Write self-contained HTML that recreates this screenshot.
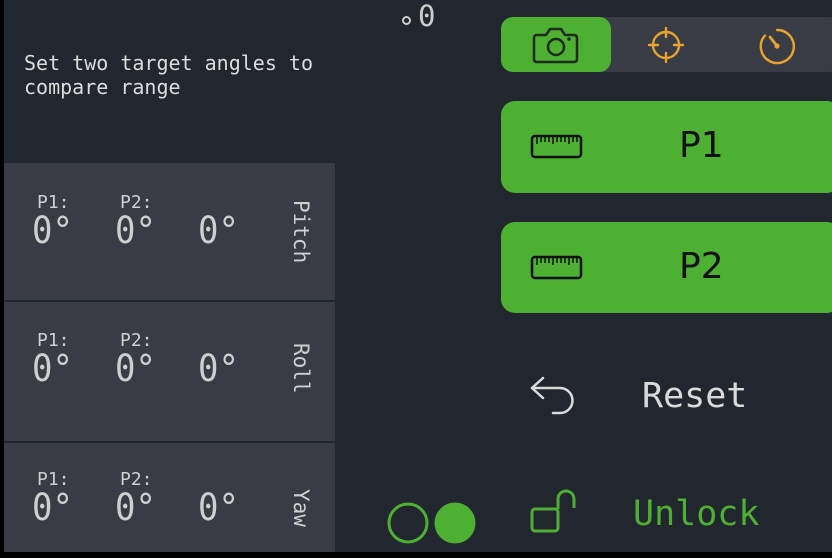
<!DOCTYPE html>
<html><head><meta charset="utf-8"><style>
*{margin:0;padding:0;box-sizing:border-box}
body{width:832px;height:558px;background:#000;position:relative;overflow:hidden;font-family:"DejaVu Sans Mono","Liberation Mono",monospace}
#app{position:absolute;left:4px;top:0;width:828px;height:552px;background:#22262e}
.a{position:absolute;white-space:nowrap;line-height:1}
.panel{position:absolute;left:4px;width:331px;background:#393c44}
.lbl{font-size:18px;color:#cfcfcf}
.val{font-size:34px;color:#cfcfcf;transform:scaleY(1.1);transform-origin:top left}
.vt{writing-mode:vertical-rl;font-size:21px;color:#cfcfcf;line-height:1}
</style></head><body>
<div id="app"></div>
<div class="a" style="left:24px;top:51px;font-size:20px;color:#dcdcdc;line-height:24px">Set two target angles to<br>compare range</div>
<div style="position:absolute;left:402px;top:16px;width:9px;height:9px;border:2px solid #ccc;border-radius:50%"></div>
<div class="a" style="left:418px;top:2px;font-size:29px;color:#ccc">0</div>

<div class="panel" style="top:163px;height:137px"></div>
<div class="panel" style="top:302px;height:139px"></div>
<div class="panel" style="top:443px;height:109px"></div>

<div class="a lbl" style="left:37px;top:194px">P1:</div><div class="a lbl" style="left:120px;top:194px">P2:</div>
<div class="a val" style="left:32px;top:212px">0°</div><div class="a val" style="left:115px;top:212px">0°</div><div class="a val" style="left:198px;top:212px">0°</div>
<div class="a vt" style="left:290px;top:200px">Pitch</div>

<div class="a lbl" style="left:37px;top:332px">P1:</div><div class="a lbl" style="left:120px;top:332px">P2:</div>
<div class="a val" style="left:32px;top:350px">0°</div><div class="a val" style="left:115px;top:350px">0°</div><div class="a val" style="left:198px;top:350px">0°</div>
<div class="a vt" style="left:290px;top:343px">Roll</div>

<div class="a lbl" style="left:37px;top:471px">P1:</div><div class="a lbl" style="left:120px;top:471px">P2:</div>
<div class="a val" style="left:32px;top:489px">0°</div><div class="a val" style="left:115px;top:489px">0°</div><div class="a val" style="left:198px;top:489px">0°</div>
<div class="a vt" style="left:290px;top:489px">Yaw</div>

<div style="position:absolute;left:501px;top:17px;width:340px;height:55px;background:#393c44;border-radius:12px"></div>
<div style="position:absolute;left:501px;top:17px;width:110px;height:55px;background:#4eb033;border-radius:12px"></div>
<svg style="position:absolute;left:0;top:0" width="832" height="558">
<g fill="none" stroke="#1f2a1a" stroke-width="2.5" stroke-linejoin="round">
<path d="M537 35 h9 l4 -6 h11 l4 6 h9 q3 0 3 3 v21 q0 3 -3 3 h-37 q-3 0 -3 -3 v-21 q0 -3 3 -3z"/>
<circle cx="556" cy="47" r="8"/>
</g><circle cx="569" cy="39" r="1.8" fill="#1f2a1a"/>
<g fill="none" stroke="#e8a232" stroke-width="2.4" stroke-linecap="round">
<circle cx="666" cy="45" r="13"/><path d="M666 28v9M666 53v9M649 45h9M674 45h9"/>
<path d="M777 30 A16.5 16.5 0 1 1 765 35.5"/>
<path d="M777 46 L770 37" stroke-width="2.8"/>
</g><circle cx="777" cy="46" r="2.6" fill="#e8a232"/>
</svg>

<div style="position:absolute;left:501px;top:101px;width:340px;height:92px;background:#4eb033;border-radius:14px"></div>
<div style="position:absolute;left:501px;top:222px;width:340px;height:91px;background:#4eb033;border-radius:14px"></div>
<div class="a" style="left:679px;top:128px;font-size:36px;font-family:'DejaVu Sans',sans-serif;color:#111">P1</div>
<div class="a" style="left:679px;top:249px;font-size:36px;font-family:'DejaVu Sans',sans-serif;color:#111">P2</div>
<svg style="position:absolute;left:0;top:0" width="832" height="558">
<g fill="none" stroke="#111" stroke-width="2.5">
<rect x="532" y="136" width="49" height="21" rx="3"/><rect x="532" y="257" width="49" height="21" rx="3"/>
</g>
<g stroke="#111" stroke-width="1.5">
<path d="M537 137v7M541 137v5M545 137v5M549 137v5M553 137v7M557 137v5M561 137v5M565 137v5M569 137v7M573 137v5M577 137v5"/>
<path d="M537 258v7M541 258v5M545 258v5M549 258v5M553 258v7M557 258v5M561 258v5M565 258v5M569 258v7M573 258v5M577 258v5"/>
</g>
<g fill="none" stroke="#dadada" stroke-width="2.5" stroke-linecap="round" stroke-linejoin="round">
<path d="M543 378 L532 388 L543 398"/><path d="M532 388 H560 a12 12 0 0 1 0 25 H553"/>
</g>
<g fill="none" stroke="#4eb033" stroke-width="3">
<circle cx="408" cy="523" r="19"/>
<rect x="532" y="509" width="26" height="22" rx="3"/>
<path d="M558 509 V499 a8 8 0 0 1 16 0 V508"/>
</g>
<circle cx="455" cy="523" r="20.5" fill="#4eb033"/>
</svg>
<div class="a" style="left:642px;top:379px;font-size:35px;color:#dadada">Reset</div>
<div class="a" style="left:633px;top:497px;font-size:35px;color:#4eb033">Unlock</div>
</body></html>
